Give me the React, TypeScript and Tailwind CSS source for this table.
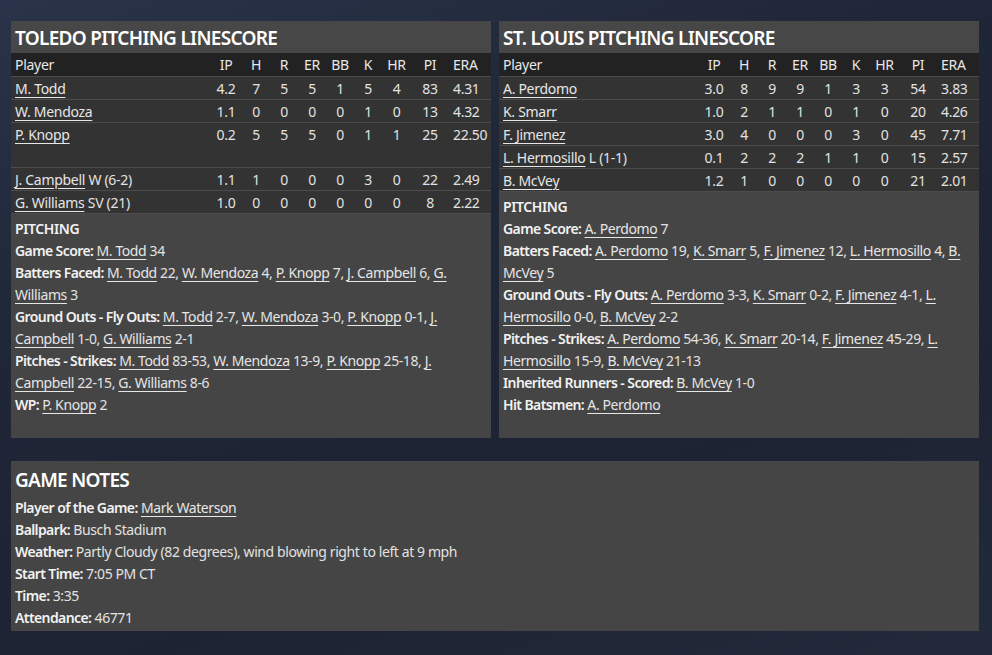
import React from 'react';

type Line = { name: string; note?: string; ip: string; s: string[]; era: string; tall?: boolean };

const toledo: Line[] = [
  { name: 'M. Todd', ip: '4.2', s: ['7', '5', '5', '1', '5', '4', '83'], era: '4.31' },
  { name: 'W. Mendoza', ip: '1.1', s: ['0', '0', '0', '0', '1', '0', '13'], era: '4.32' },
  { name: 'P. Knopp', ip: '0.2', s: ['5', '5', '5', '0', '1', '1', '25'], era: '22.50', tall: true },
  { name: 'J. Campbell', note: 'W (6-2)', ip: '1.1', s: ['1', '0', '0', '0', '3', '0', '22'], era: '2.49' },
  { name: 'G. Williams', note: 'SV (21)', ip: '1.0', s: ['0', '0', '0', '0', '0', '0', '8'], era: '2.22' },
];

const stlouis: Line[] = [
  { name: 'A. Perdomo', ip: '3.0', s: ['8', '9', '9', '1', '3', '3', '54'], era: '3.83' },
  { name: 'K. Smarr', ip: '1.0', s: ['2', '1', '1', '0', '1', '0', '20'], era: '4.26' },
  { name: 'F. Jimenez', ip: '3.0', s: ['4', '0', '0', '0', '3', '0', '45'], era: '7.71' },
  { name: 'L. Hermosillo', note: 'L (1-1)', ip: '0.1', s: ['2', '2', '2', '1', '1', '0', '15'], era: '2.57' },
  { name: 'B. McVey', ip: '1.2', s: ['1', '0', '0', '0', '0', '0', '21'], era: '2.01' },
];

// a stat line is a list of [label, [name, value][]]
type Stat = [string, [string, string][]];

const toledoStats: Stat[] = [
  ['Game Score', [['M. Todd', '34']]],
  ['Batters Faced', [['M. Todd', '22'], ['W. Mendoza', '4'], ['P. Knopp', '7'], ['J. Campbell', '6'], ['G. Williams', '3']]],
  ['Ground Outs - Fly Outs', [['M. Todd', '2-7'], ['W. Mendoza', '3-0'], ['P. Knopp', '0-1'], ['J. Campbell', '1-0'], ['G. Williams', '2-1']]],
  ['Pitches - Strikes', [['M. Todd', '83-53'], ['W. Mendoza', '13-9'], ['P. Knopp', '25-18'], ['J. Campbell', '22-15'], ['G. Williams', '8-6']]],
  ['WP', [['P. Knopp', '2']]],
];

const stlStats: Stat[] = [
  ['Game Score', [['A. Perdomo', '7']]],
  ['Batters Faced', [['A. Perdomo', '19'], ['K. Smarr', '5'], ['F. Jimenez', '12'], ['L. Hermosillo', '4'], ['B. McVey', '5']]],
  ['Ground Outs - Fly Outs', [['A. Perdomo', '3-3'], ['K. Smarr', '0-2'], ['F. Jimenez', '4-1'], ['L. Hermosillo', '0-0'], ['B. McVey', '2-2']]],
  ['Pitches - Strikes', [['A. Perdomo', '54-36'], ['K. Smarr', '20-14'], ['F. Jimenez', '45-29'], ['L. Hermosillo', '15-9'], ['B. McVey', '21-13']]],
  ['Inherited Runners - Scored', [['B. McVey', '1-0']]],
  ['Hit Batsmen', [['A. Perdomo', '']]],
];

const cols = 'grid grid-cols-[199px_32px_28px_28px_28px_28px_28px_29px_38px_42px]';
const heads = ['IP', 'H', 'R', 'ER', 'BB', 'K', 'HR', 'PI'];

const Link = ({ children }: { children: React.ReactNode }) => (
  <a href="#" className="underline underline-offset-[3px] decoration-1 text-[#e6e6e6]">
    {children}
  </a>
);

const Linescore = ({ title, lines, stats }: { title: string; lines: Line[]; stats: Stat[] }) => (
  <div className="flex flex-col h-[417px] bg-[#454545]">
    <div className="h-8 flex items-center px-1 bg-[#474747]">
      <h2 className="text-[19px] font-semibold text-white tracking-[-0.7px] pt-[2px]">{title}</h2>
    </div>
    <div className={`${cols} h-[23px] items-center bg-[#222222] text-[14px] tracking-[-0.3px] text-[#e8e8e8]`}>
      <span className="pl-1">Player</span>
      {heads.map((h) => (
        <span key={h} className="text-center">{h}</span>
      ))}
      <span className="pl-[4px]">ERA</span>
    </div>
    {lines.map((l) => (
      <div
        key={l.name}
        className={`${cols} ${l.tall ? 'h-[45px] pt-[1px]' : 'h-[23px] items-center'} bg-[#333333] border-t border-[#4c4c4c] text-[14px] tracking-[-0.3px] text-[#e2e2e2]`}
      >
        <span className="pl-1 whitespace-nowrap">
          <Link>{l.name}</Link>
          {l.note && <span> {l.note}</span>}
        </span>
        <span className="text-center">{l.ip}</span>
        {l.s.map((v, i) => (
          <span key={i} className="text-center">{v}</span>
        ))}
        <span className="pl-[4px]">{l.era}</span>
      </div>
    ))}
    <div className="flex-1 border-t border-[#4c4c4c] pl-1 pt-1 pr-4 text-[14px] leading-[22px] tracking-[-0.4px] text-[#e2e2e2]">
      <div className="font-semibold text-[#f2f2f2]">PITCHING</div>
      {stats.map(([label, items]) => (
        <div key={label}>
          <span className="font-semibold text-[#f2f2f2] tracking-[-0.6px]">{label}:</span>{' '}
          {items.map(([n, v], i) => (
            <React.Fragment key={n}>
              <Link>{n}</Link>
              {v && ` ${v}`}
              {i < items.length - 1 && ', '}
            </React.Fragment>
          ))}
        </div>
      ))}
    </div>
  </div>
);

const Note = ({ label, children }: { label: string; children: React.ReactNode }) => (
  <div>
    <span className="font-semibold text-[#f2f2f2] tracking-[-0.6px]">{label}:</span> {children}
  </div>
);

export default function App() {
  return (
    <div className="min-h-[655px] w-full bg-[#1f2535] bg-[linear-gradient(160deg,#2a3349_0%,#1f2637_35%,#1d2333_70%,#222a3b_100%)] pt-[21px] pl-[11px] font-['Noto_Sans','Open_Sans',sans-serif]">
      <div className="w-[968px]">
        <div className="grid grid-cols-2 gap-2">
          <Linescore title="TOLEDO PITCHING LINESCORE" lines={toledo} stats={toledoStats} />
          <Linescore title="ST. LOUIS PITCHING LINESCORE" lines={stlouis} stats={stlStats} />
        </div>

        {/* Game notes */}
        <div className="mt-[23px] h-[170px] bg-[#454545] px-1 text-[14px] leading-[22px] tracking-[-0.4px] text-[#e2e2e2]">
          <h2 className="h-9 flex items-center pt-[2px] text-[19px] font-semibold tracking-[-0.7px] text-white">GAME NOTES</h2>
          <Note label="Player of the Game">
            <Link>Mark Waterson</Link>
          </Note>
          <Note label="Ballpark">Busch Stadium</Note>
          <Note label="Weather">Partly Cloudy (82 degrees), wind blowing right to left at 9 mph</Note>
          <Note label="Start Time">7:05 PM CT</Note>
          <Note label="Time">3:35</Note>
          <Note label="Attendance">46771</Note>
        </div>
      </div>
    </div>
  );
}
